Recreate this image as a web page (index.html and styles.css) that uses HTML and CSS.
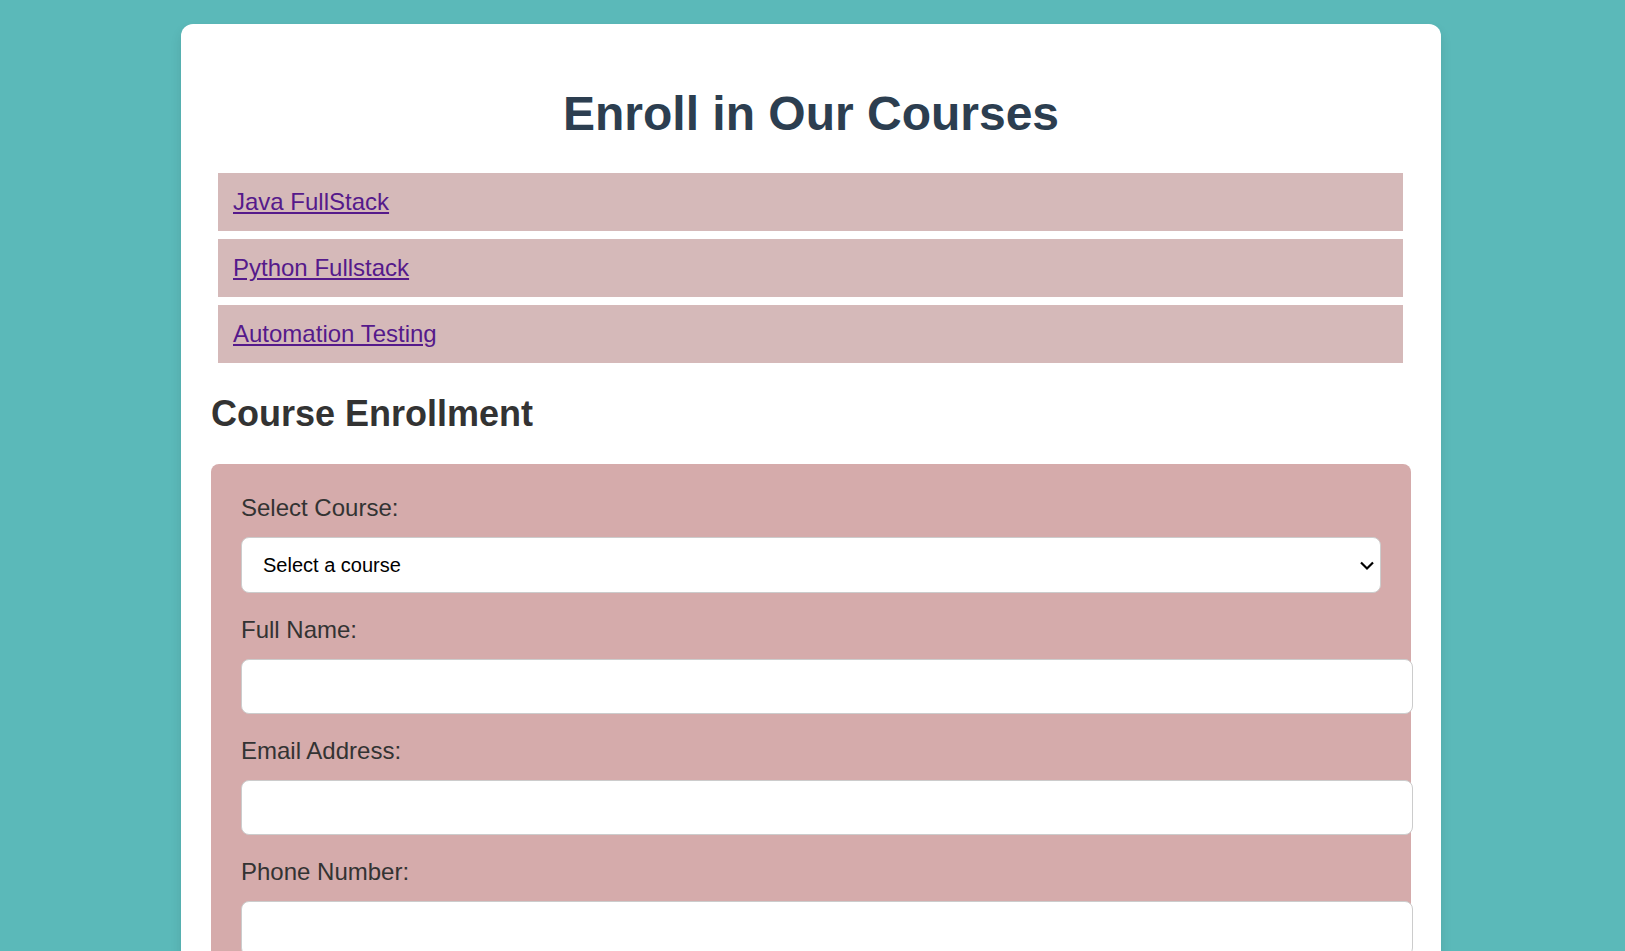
FILE: index.html
```html
<!DOCTYPE html>
<html lang="en">
<head>
<meta charset="utf-8">
<meta name="viewport" content="width=device-width, initial-scale=1">
<title>Enroll in Our Courses</title>
<link rel="stylesheet" href="styles.css">
</head>
<body class="page">
<main class="card">
  <h1 class="title">Enroll in Our Courses</h1>
  <ul class="courses">
    <li class="course"><a class="course-link" href="#java">Java FullStack</a></li>
    <li class="course"><a class="course-link" href="#python">Python Fullstack</a></li>
    <li class="course"><a class="course-link" href="#testing">Automation Testing</a></li>
  </ul>
  <h2 class="subtitle">Course Enrollment</h2>
  <form class="form">
    <div class="field">
      <label class="label" for="course">Select Course:</label>
      <div class="select-wrap">
        <select class="control select" id="course" name="course">
          <option>Select a course</option>
        </select>
        <svg class="chevron" width="14" height="10" viewBox="0 0 14 10" aria-hidden="true"><path d="M1 1.5 L7 7.5 L13 1.5" fill="none" stroke="#000" stroke-width="2.2"/></svg>
      </div>
    </div>
    <div class="field">
      <label class="label" for="name">Full Name:</label>
      <input class="control input" type="text" id="name" name="name">
    </div>
    <div class="field">
      <label class="label" for="email">Email Address:</label>
      <input class="control input" type="email" id="email" name="email">
    </div>
    <div class="field">
      <label class="label" for="phone">Phone Number:</label>
      <input class="control input" type="tel" id="phone" name="phone">
    </div>
  </form>
</main>
</body>
</html>
```
FILE: styles.css
```css
.page {
  margin: 0;
  padding: 24px 3px 24px 0;
  background: #5bb9b9;
  color: #333;
  font: 24px/28px "Liberation Sans", Arial, sans-serif;
}

.card {
  max-width: 1200px;
  margin: 0 auto;
  padding: 30px;
  border-radius: 12px;
  background: #fff;
  box-shadow: 0 6px 12px rgba(0, 0, 0, 0.1);
}

.title {
  margin: 32px 0;
  color: #2c3e50;
  font-size: 48px;
  line-height: 55px;
  text-align: center;
}

.courses {
  display: grid;
  gap: 8px;
  margin: 0;
  padding: 0 8px 0 7px;
  list-style: none;
}

.course {
  padding: 15px;
  background: #d5b9b9;
}

.course-link {
  color: #551a8b;
}

.subtitle {
  margin: 30px 0;
  font-size: 36px;
  line-height: 41px;
}

.form {
  display: grid;
  gap: 23px;
  padding: 30px;
  border-radius: 8px;
  background: #d5abab;
}

.label {
  display: block;
  margin-bottom: 15px;
}

.control {
  display: block;
  padding: 15px;
  border: 1px solid #ccc;
  border-radius: 8px;
  background: #fff;
  color: #000;
  font: 20px/23px "Liberation Sans", Arial, sans-serif;
}

.input {
  width: 100%;
}

.select-wrap {
  position: relative;
}

.select {
  box-sizing: border-box;
  width: 100%;
  height: 56px;
  padding-left: 21px;
  appearance: none;
}

.chevron {
  position: absolute;
  top: 24px;
  right: 7px;
  pointer-events: none;
}
```
